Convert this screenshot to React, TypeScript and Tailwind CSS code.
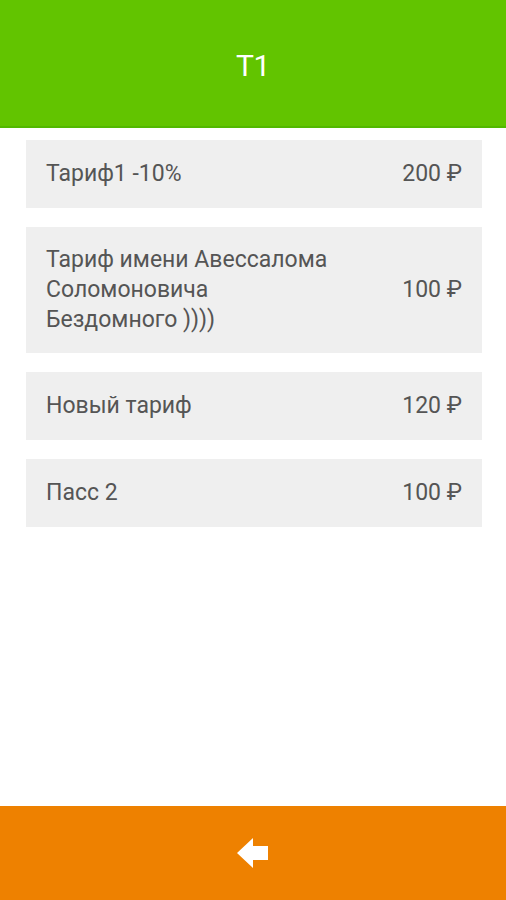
const tariffs = [
  { name: "Тариф1 -10%", price: "200 ₽" },
  { name: "Тариф имени Авессалома Соломоновича Бездомного ))))", price: "100 ₽" },
  { name: "Новый тариф", price: "120 ₽" },
  { name: "Пасс 2", price: "100 ₽" },
];

export default function App() {
  return (
    <div
      className="flex h-[900px] w-[506px] flex-col bg-white"
      style={{ fontFamily: "Roboto, 'Noto Sans', sans-serif" }}
    >
      {/* Header */}
      <header className="flex h-[128px] shrink-0 items-center justify-center border-b-2 border-[#52b800] bg-[#62c400] pt-[6px]">
        <h1 className="text-[30px] leading-none tracking-[-0.5px] text-white">T1</h1>
      </header>

      {/* Tariff list */}
      <main className="flex flex-1 flex-col gap-[19px] pl-[26px] pr-[24px] pt-[12px]">
        {tariffs.map((t, idx) => (
          <div
            key={idx}
            className="flex min-h-[68px] items-center justify-between bg-[#efefef] px-[20px] py-[18px] text-[23px] leading-[30px] text-[#555555]"
          >
            <span className="w-[292px]">{t.name}</span>
            <span className="whitespace-nowrap">{t.price}</span>
          </div>
        ))}
      </main>

      {/* Back bar */}
      <footer className="flex h-[94px] shrink-0 items-center justify-center bg-[#ee8100]">
        <svg width="32" height="30" viewBox="0 0 32 30" fill="white">
          <path d="M0 15 L16 0 L16 8 L31 8 L31 22 L16 22 L16 30 Z" />
        </svg>
      </footer>
    </div>
  );
}
